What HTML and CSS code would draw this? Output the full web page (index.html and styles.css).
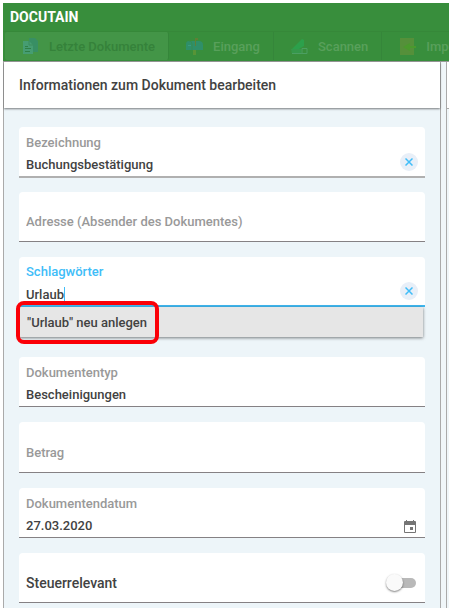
FILE: index.html
```html
<!DOCTYPE html>
<html lang="de">
<head>
    <meta charset="utf-8" />
    <title>Docutain</title>
    <link rel="stylesheet" href="styles.css">
</head>
<body>
    <div class="app">
        <header class="app-header">
            <div class="app-title">DOCUTAIN</div>
            <nav class="tabs">
                <a class="tab tab-selected" href="#letzte">
                    <svg class="tab-icon" viewBox="0 0 17 17">
                        <path d="M7 0h6l3 3v11H7z" fill="#388f64" />
                        <path d="M1 3h6l4 4v9H1z" fill="#469d72" />
                        <path d="M7 3v4h4" fill="none" stroke="#3a8c5c" />
                        <path d="M3 8.5h3M3 10.5h6M3 13.5h5" stroke="#2f8046" />
                    </svg>
                    <span>Letzte Dokumente</span>
                </a>
                <a class="tab" href="#eingang">
                    <svg class="tab-icon" viewBox="0 0 17 17">
                        <path d="M3 3h10a4 4 0 0 1 4 4v5H0V6a3 3 0 0 1 3-3z" fill="#2f8f69" />
                        <path d="M6 12V6a3 3 0 0 0-3-3" fill="none" stroke="#358c52" />
                        <path d="M2 7.5h3" stroke="#3b9c80" />
                        <path d="M9 8V0h3v2h-2v6z" fill="#5f7f35" />
                        <path d="M7 12h3v5H7z" fill="#579437" />
                    </svg>
                    <span>Eingang</span>
                </a>
                <a class="tab" href="#scannen">
                    <svg class="tab-icon" viewBox="0 0 17 17">
                        <path d="M1 11L11 1l2 1v6l-5 3z" fill="#2ca04b" />
                        <path d="M0 11h10v5H1z" fill="#35984b" />
                        <path d="M1 15.5h15V10.500h-5v5" fill="none" stroke="#4b9f62" />
                    </svg>
                    <span>Scannen</span>
                </a>
                <a class="tab" href="#import">
                    <svg class="tab-icon" viewBox="0 0 17 17">
                        <path d="M1 0h14v17H1z" fill="#55903a" />
                        <path d="M17 8h-6V5L4 9l7 4v-3h6z" fill="#4a9a2d" />
                    </svg>
                    <span>Import</span>
                </a>
            </nav>
        </header>

        <main class="content">
            <section class="panel">
                <h1 class="panel-title">Informationen zum Dokument bearbeiten</h1>
                <form class="fields">
                    <div class="field field-strong">
                        <div class="field-text">
                            <label for="bezeichnung">Bezeichnung</label>
                            <input id="bezeichnung" type="text" value="Buchungsbestätigung">
                        </div>
                        <button class="clear" type="button" aria-label="Löschen">
                            <svg viewBox="0 0 8 8"><path d="M0.5 0.5l7 7M7.5 0.5l-7 7" /></svg>
                        </button>
                    </div>

                    <div class="field">
                        <div class="field-text">
                            <input id="adresse" type="text" placeholder="Adresse (Absender des Dokumentes)" aria-label="Adresse (Absender des Dokumentes)">
                        </div>
                    </div>

                    <div class="tags">
                        <div class="field field-active">
                            <div class="field-text">
                                <label for="tags">Schlagwörter</label>
                                <input id="tags" type="text" value="Urlaub">
                                <span class="caret"></span>
                            </div>
                            <button class="clear" type="button" aria-label="Löschen">
                                <svg viewBox="0 0 8 8"><path d="M0.5 0.5l7 7M7.5 0.5l-7 7" /></svg>
                            </button>
                        </div>
                        <button class="suggestion" type="button">"Urlaub" neu anlegen</button>
                        <span class="marker"></span>
                    </div>

                    <div class="field">
                        <div class="field-text">
                            <label for="typ">Dokumententyp</label>
                            <input id="typ" type="text" value="Bescheinigungen">
                        </div>
                    </div>

                    <div class="field field-tall">
                        <div class="field-text">
                            <input id="betrag" type="text" placeholder="Betrag" aria-label="Betrag">
                        </div>
                    </div>

                    <div class="field">
                        <div class="field-text">
                            <label for="datum">Dokumentendatum</label>
                            <input id="datum" type="text" value="27.03.2020">
                        </div>
                        <button class="calendar" type="button" aria-label="Kalender">
                            <svg viewBox="0 0 12 14">
                                <path d="M2 0h1v1h6V0h1v1h1a1 1 0 0 1 1 1v10a1 1 0 0 1-1 1H1a1 1 0 0 1-1-1V2a1 1 0 0 1 1-1h1zM1 5v7h10V5z" fill-rule="evenodd" />
                                <path d="M6 7h3v3H6z" />
                            </svg>
                        </button>
                    </div>

                    <div class="field">
                        <label class="switch-label" for="steuer">Steuerrelevant</label>
                        <input id="steuer" class="switch" type="checkbox">
                    </div>
                </form>
            </section>
            <section class="panel-next">
                <div class="panel-next-title"></div>
            </section>
        </main>
    </div>
</body>
</html>
```

FILE: styles.css
```css
* {
    box-sizing: border-box;
}

body {
    background-color: white;
    color: #424242;
    font-family: Roboto, "Liberation Sans", sans-serif;
    font-size: 13px;
    font-weight: 500;
    height: 100vh;
    margin: 0;
    padding: 3px 3px 4px;
}

button,
input {
    border: none;
    color: inherit;
    font: inherit;
    margin: 0;
    outline: none;
    padding: 0;
}

.app {
    display: flex;
    flex-direction: column;
    height: 100%;
    overflow: hidden;
}

/* header */

.app-header {
    background-color: #388e3c;
    border-bottom: 1px solid #999;
    flex: none;
}

.app-title {
    color: white;
    font-size: 14px;
    font-weight: 700;
    line-height: 28px;
    padding: 0 7px;
}

.tabs {
    border-top: 1px solid #368839;
    display: flex;
    overflow: hidden;
    padding: 0 2px 1px;
}

.tab {
    align-items: center;
    border-right: 1px solid #35863a;
    color: #58a05b;
    display: flex;
    flex: none;
    gap: 10px;
    height: 28px;
    padding: 0 13px 0 17px;
    text-decoration: none;
}

.tab-selected {
    background-color: #439547;
    border-radius: 2px;
    color: #35823a;
}

.tab-icon {
    height: 17px;
    width: 17px;
}

/* panels */

.content {
    display: flex;
    flex: 1;
    gap: 5px;
    min-height: 0;
    background-color: #f0f6f9;
}

.panel {
    background-color: #edf5f9;
    border-left: 1px solid #aaa;
    border-right: 1px solid #aaa;
    flex: 1;
    min-width: 0;
}

.panel-title {
    background-color: white;
    box-shadow: 0 1px 2px rgba(0, 0, 0, 0.5);
    font-size: 14px;
    font-weight: 500;
    line-height: 46px;
    margin: 0;
    padding: 0 15px;
}

.panel-next {
    border-left: 1px solid #aaa;
    width: 3px;
}

.panel-next-title {
    background-color: white;
    border-bottom: 1px solid #aaa;
    height: 47px;
}

/* form */

.fields {
    display: flex;
    flex-direction: column;
    gap: 15px;
    padding: 19px 15px 0;
}

.field {
    align-items: center;
    background-color: white;
    border-bottom: 1px solid #858184;
    border-radius: 4px 4px 0 0;
    display: flex;
    height: 50px;
    padding: 10px 7px 0;
}

.field-strong {
    border-bottom: 2px solid #b0b0b0;
    height: 51px;
    margin-bottom: -1px;
}

.field-tall {
    height: 51px;
}

.field-active {
    border-bottom: 2px solid #40b8f0;
}

.field-text {
    flex: 1;
    min-width: 0;
    position: relative;
}

.field label {
    display: block;
}

.field-text label {
    color: #999;
    line-height: 22px;
    margin-top: -6px;
}

.field-active .field-text label {
    color: #40bdf8;
}

.field-text input {
    background: none;
    display: block;
    height: 22px;
    width: 100%;
}

.field-text input::placeholder {
    color: #999;
    opacity: 1;
}

.clear {
    align-items: center;
    align-self: flex-end;
    background-color: #e8eff8;
    border-radius: 50%;
    display: flex;
    height: 18px;
    justify-content: center;
    margin-bottom: 5px;
    width: 18px;
}

.clear svg {
    height: 8px;
    stroke: #40bdf8;
    stroke-width: 1.5;
    width: 8px;
}

.caret {
    background-color: #40bdf8;
    bottom: 4px;
    height: 14px;
    left: 38px;
    position: absolute;
    width: 1px;
}

.tags {
    margin-bottom: 5px;
    position: relative;
}

.suggestion {
    background-color: #e6e6e6;
    box-shadow: 0 1px 3px rgba(0, 0, 0, 0.5);
    display: block;
    height: 30px;
    padding: 0 8px;
    text-align: left;
    width: calc(100% - 2px);
}

/* highlight around the suggestion */
.marker {
    border: 4px solid #fb0007;
    border-radius: 8px;
    height: 43px;
    left: -3px;
    pointer-events: none;
    position: absolute;
    top: 44px;
    width: 143px;
}

.calendar {
    align-self: flex-end;
    background: none;
    height: 14px;
    margin: 0 2px 3px 0;
    width: 12px;
}

.calendar svg {
    display: block;
    fill: #757575;
    height: 14px;
    width: 12px;
}

.switch-label {
    flex: 1;
    font-size: 14px;
}

.switch {
    appearance: none;
    height: 18px;
    margin-right: 2px;
    position: relative;
    width: 30px;
}

.switch::before,
.switch::after {
    content: "";
    position: absolute;
}

.switch::before {
    background-color: #b9b9b9;
    border-radius: 5px;
    height: 10px;
    left: 4px;
    right: 0;
    top: 4px;
}

.switch::after {
    background-color: #fafafa;
    border-radius: 50%;
    box-shadow: 0 1px 2px rgba(0, 0, 0, 0.5);
    height: 17px;
    left: 0;
    top: 0;
    width: 17px;
}
```
